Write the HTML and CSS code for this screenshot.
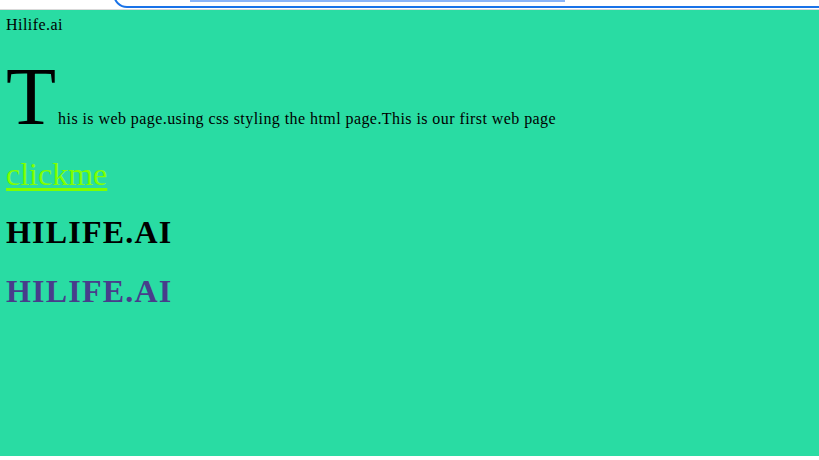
FILE: index.html
```html
<!DOCTYPE html>
<html>
<head>
<meta charset="utf-8">
<title>Hilife.ai</title>
<link rel="stylesheet" href="styles.css">
</head>
<body>
<div class="chrome">
  <div class="omnibox"></div>
  <div class="tabbar"></div>
</div>
<main class="page">
  <div class="brand">Hilife.ai</div>
  <p class="lead"><span class="drop">T</span>his is web page.using css styling the html page.This is our first web page</p>
  <a class="link" href="#">clickme</a>
  <h1 class="title">HILIFE.AI</h1>
  <h1 class="title title-purple">HILIFE.AI</h1>
</main>
<div class="footer-strip"></div>
</body>
</html>
```

FILE: styles.css
```css
html, body {
  margin: 0;
  padding: 0;
  background: #ffffff;
}
body {
  font-family: "Liberation Serif", "Times New Roman", serif;
  color: #000;
  width: 819px;
  height: 460px;
  overflow: hidden;
}
.chrome {
  position: relative;
  height: 9px;
  background: #ffffff;
  border-bottom: 1px solid #d9d9d9;
  overflow: hidden;
}
.omnibox {
  position: absolute;
  left: 113px;
  top: -20px;
  right: -20px;
  height: 24px;
  border: 2px solid #1a73e8;
  border-radius: 14px;
}
.tabbar {
  position: absolute;
  left: 190px;
  top: 0;
  width: 375px;
  height: 2px;
  background: #8ab4f8;
}
.page {
  background: #29dca3;
  height: 446px;
  padding: 7px 6px 0;
  box-sizing: border-box;
  display: flex;
  flex-direction: column;
  align-items: flex-start;
}
.brand {
  font-size: 16px;
  line-height: 16px;
  letter-spacing: 0.45px;
}
.lead {
  margin: 24px 0 0;
  font-size: 16px;
  line-height: 16px;
  letter-spacing: 0.43px;
}
.drop {
  font-size: 82px;
  line-height: 80px;
  letter-spacing: 2px;
}
.link {
  margin-top: 21px;
  font-size: 32px;
  line-height: 32px;
  color: #7fff00;
  text-decoration: underline;
  text-decoration-thickness: 3px;
  text-underline-offset: 3px;
}
.title {
  margin: 26px 0 0;
  font-size: 32px;
  line-height: 32px;
  font-weight: bold;
  letter-spacing: 1.2px;
}
.title-purple {
  margin-top: 27px;
  color: #483d8b;
}
.footer-strip {
  height: 4px;
  background: #ffffff;
}
```
